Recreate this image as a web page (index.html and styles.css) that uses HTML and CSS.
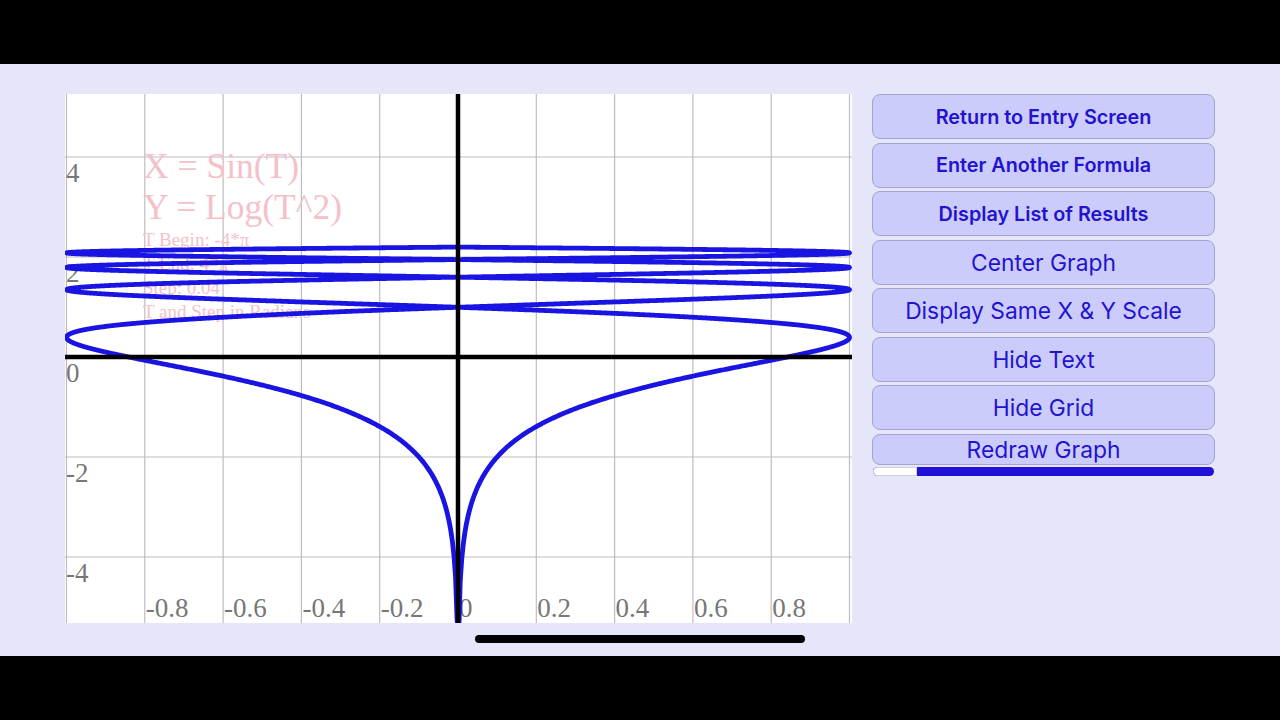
FILE: index.html
```html
<!DOCTYPE html>
<html lang="en">
<head>
    <meta charset="UTF-8">
    <meta name="viewport" content="width=device-width, initial-scale=1.0">
    <title>Parametric Graph</title>
    <link rel="stylesheet" href="styles.css">
</head>
<body>
    <div class="screen">
        <div class="plot" id="plot">
            <svg class="layer" id="grid" width="787" height="529"></svg>
            <div class="formula" id="formula">
                <div class="formula-big">X = Sin(T)</div>
                <div class="formula-big">Y = Log(T^2)</div>
                <div class="formula-small">T Begin: -4*π</div>
                <div class="formula-small">T End: 4*π</div>
                <div class="formula-small">Step: 0.04</div>
                <div class="formula-small">T and Step in Radians</div>
            </div>
            <svg class="layer" id="curve" width="787" height="529"></svg>
        </div>
        <div class="controls">
            <button class="btn btn-strong">Return to Entry Screen</button>
            <button class="btn btn-strong">Enter Another Formula</button>
            <button class="btn btn-strong">Display List of Results</button>
            <button class="btn">Center Graph</button>
            <button class="btn">Display Same X &amp; Y Scale</button>
            <button class="btn">Hide Text</button>
            <button class="btn">Hide Grid</button>
            <button class="btn btn-short">Redraw Graph</button>
            <div class="progress"><div class="progress-left"></div></div>
        </div>
        <div class="home-bar"></div>
    </div>
    <script>
        const W = 787;
        const H = 529;
        // graph origin and scale, in plot pixels
        const X0 = 393, Y0 = 263, KX = 391.5, KY = 50;
        const sx = x => X0 + KX * x;
        const sy = y => Y0 - KY * y;
        const NS = 'http://www.w3.org/2000/svg';

        const plot = document.getElementById('plot');
        const grid = document.getElementById('grid');
        const curve = document.getElementById('curve');
        const formula = document.getElementById('formula');

        function addLine(svg, x1, y1, x2, y2, cls) {
            const l = document.createElementNS(NS, 'line');
            l.setAttribute('x1', x1);
            l.setAttribute('y1', y1);
            l.setAttribute('x2', x2);
            l.setAttribute('y2', y2);
            l.setAttribute('class', cls);
            svg.appendChild(l);
        }

        function addLabel(text, left, top) {
            const el = document.createElement('div');
            el.className = 'tick';
            el.textContent = text;
            el.style.left = left + 'px';
            el.style.top = top + 'px';
            plot.insertBefore(el, formula);
        }

        // vertical grid + x labels
        for (let i = -5; i <= 5; i++) {
            const x = sx(i / 5);
            if (i !== 0) addLine(grid, x, 0, x, H, 'grid-line');
            if (i > -5 && i < 5) {
                addLabel(i === 0 ? '0' : (i / 5).toFixed(1), x + 1, 501);
            }
        }

        // horizontal grid + y labels
        for (let v = -4; v <= 4; v += 2) {
            const y = sy(v);
            if (v !== 0) addLine(grid, 0, y, W, y, 'grid-line');
            addLabel(String(v), 1, y + 2.5);
        }

        // X = sin(T), Y = log(T^2), sampled finely so the trace stays smooth
        const pts = [];
        const end = 4 * Math.PI;
        for (let t = -end; t <= end + 1e-9; t += 0.004) {
            const y = Math.max(Math.log10(t * t), -7);
            pts.push(sx(Math.sin(t)).toFixed(2) + ',' + sy(y).toFixed(2));
        }
        const path = document.createElementNS(NS, 'path');
        path.setAttribute('d', 'M' + pts.join('L'));
        path.setAttribute('class', 'trace');
        curve.appendChild(path);

        addLine(curve, sx(0), 0, sx(0), H, 'axis');
        addLine(curve, 0, sy(0), W, sy(0), 'axis');
    </script>
</body>
</html>
```

FILE: styles.css
```css
body {
    margin: 0;
    background-color: #000;
    font-family: Inter, "Noto Sans", sans-serif;
}
.screen {
    position: relative;
    box-sizing: border-box;
    height: 592px;
    margin-top: 64px;
    padding: 30px 0 0 65px;
    display: flex;
    align-items: flex-start;
    gap: 20px;
    background-color: #e6e6fa;
}
.plot {
    position: relative;
    flex: none;
    width: 787px;
    height: 529px;
    overflow: hidden;
    background-color: #fff;
}
.layer {
    position: absolute;
    left: 0;
    top: 0;
}
.grid-line {
    stroke: #bdbdbd;
    stroke-width: 1.2;
}
.axis {
    stroke: #000;
    stroke-width: 4.5;
}
.trace {
    fill: none;
    stroke: #1a14e2;
    stroke-width: 4.8;
    stroke-linejoin: round;
    stroke-linecap: round;
}
.tick {
    position: absolute;
    font-family: "Liberation Serif", serif;
    font-size: 27px;
    line-height: 27px;
    color: #777;
    white-space: nowrap;
}
.formula {
    position: absolute;
    left: 78px;
    top: 52px;
    font-family: "Liberation Serif", serif;
    color: #f5c1c9;
    white-space: nowrap;
}
.formula-big {
    font-size: 35.5px;
    line-height: 41px;
}
.formula-small {
    font-size: 19px;
    line-height: 24px;
}
.controls {
    flex: none;
    width: 343px;
    display: flex;
    flex-direction: column;
    gap: 3.5px;
}
.btn {
    height: 45px;
    padding: 0;
    border: 1px solid #a4a4cc;
    border-radius: 8px;
    background-color: #ccccfc;
    color: #2213cf;
    font-family: Inter, "Noto Sans", sans-serif;
    font-size: 22.8px;
    font-weight: 400;
}
.btn-strong {
    font-size: 19.8px;
    font-weight: 600;
}
.btn-short {
    height: 31px;
}
.progress {
    height: 9px;
    margin: -1px 1px 0;
    border-radius: 5px;
    background-color: #2010d8;
    overflow: hidden;
}
.progress-left {
    width: 44px;
    height: 100%;
    border-radius: 5px 0 0 5px;
    background-color: #fff;
    box-shadow: inset 0 0 0 1px #d0d0e0;
}
.home-bar {
    position: absolute;
    left: 475px;
    top: 571px;
    width: 330px;
    height: 8px;
    border-radius: 4px;
    background-color: #000;
}
```
